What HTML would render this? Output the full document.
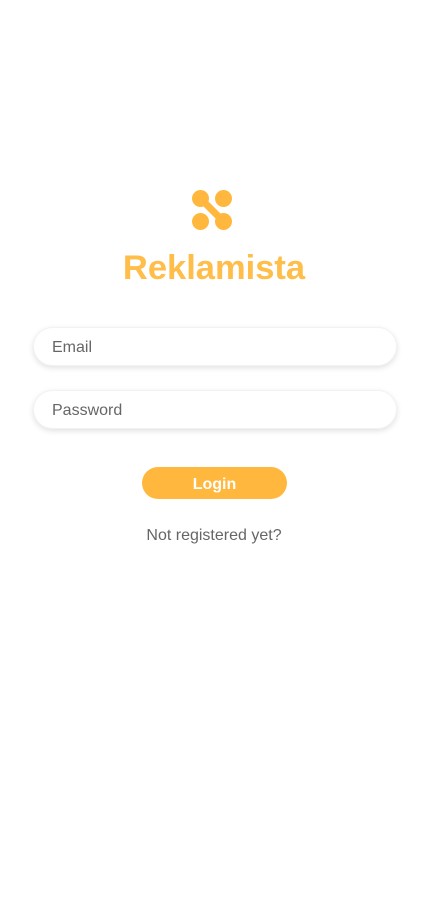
<!DOCTYPE html>
<html><head><style>
body{margin:0;width:428px;height:924px;background:#fff;font-family:"Liberation Sans",sans-serif;position:relative;overflow:hidden}
.t{position:absolute;left:0;width:428px;text-align:center}
.in{position:absolute;left:33px;width:364px;height:39px;border-radius:20px;background:#fff;box-shadow:0 2px 6px rgba(0,0,0,0.12);border:1px solid #f2f2f2;box-sizing:border-box;font-size:16px;color:#666;line-height:39px;padding-left:18px}
</style></head><body>
<svg style="position:absolute;left:0;top:0" width="428" height="240">
<g fill="#ffb83d"><circle cx="200.5" cy="198.5" r="8.5"/><circle cx="223.5" cy="198.5" r="8.5"/><circle cx="200.5" cy="221.5" r="8.5"/><circle cx="223.5" cy="221.5" r="8.5"/></g>
<line x1="200.5" y1="198.5" x2="223.5" y2="221.5" stroke="#ffb83d" stroke-width="7"/>
</svg>
<div class="t" style="top:247px;font-size:34.5px;font-weight:bold;color:#ffbd4a;line-height:42px">Reklamista</div>
<div class="in" style="top:327px">Email</div>
<div class="in" style="top:390px">Password</div>
<div style="position:absolute;left:142px;top:467px;width:145px;height:32px;border-radius:16px;background:#ffb83d;color:#fff;font-weight:bold;font-size:16px;line-height:35px;text-align:center">Login</div>
<div class="t" style="top:526px;font-size:16px;color:#666;line-height:20px">Not registered yet?</div>
</body></html>
